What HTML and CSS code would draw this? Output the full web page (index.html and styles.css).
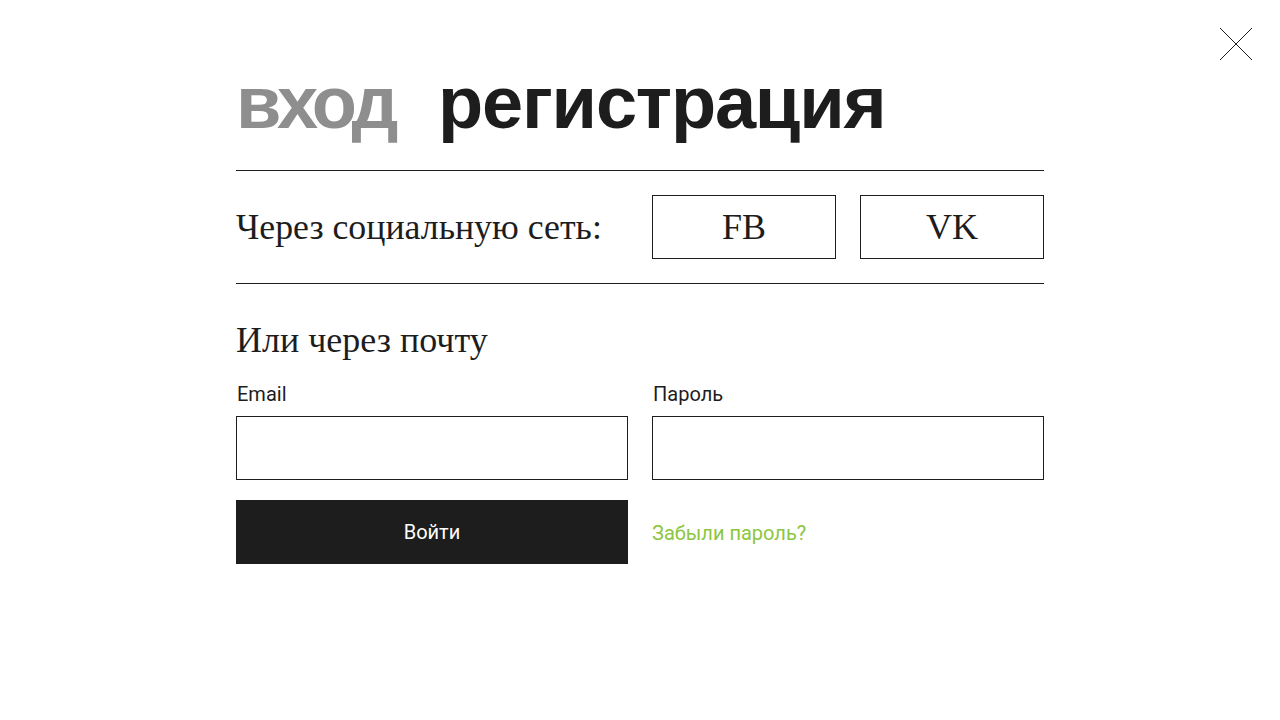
FILE: index.html
```html
<!DOCTYPE html>
<html lang="ru">
<head>
<meta charset="utf-8">
<title>Вход</title>
<link rel="stylesheet" href="styles.css">
</head>
<body>
<button class="close" aria-label="Закрыть">
  <svg width="34" height="34" viewBox="0 0 34 34"><path d="M1 1L33 33M33 1L1 33" stroke="#1d1d1d" stroke-width="1" fill="none"/></svg>
</button>
<main class="auth">
  <div class="tabs">
    <span class="tab tab-inactive">вход</span>
    <span class="tab tab-active">регистрация</span>
  </div>
  <section class="social">
    <h2 class="social-title">Через социальную сеть:</h2>
    <div class="social-buttons">
      <button class="social-btn">FB</button>
      <button class="social-btn">VK</button>
    </div>
  </section>
  <section class="mail">
    <h2 class="mail-title">Или через почту</h2>
    <div class="grid">
      <label class="field">
        <span class="label">Email</span>
        <input class="input" type="text">
      </label>
      <label class="field">
        <span class="label">Пароль</span>
        <input class="input" type="password">
      </label>
      <button class="submit">Войти</button>
      <a class="forgot" href="#">Забыли пароль?</a>
    </div>
  </section>
</main>
</body>
</html>
```
FILE: styles.css
```css
* { box-sizing: border-box; }
html, body { margin: 0; padding: 0; background: #fff; }
body { width: 1280px; height: 720px; position: relative; color: #1d1d1d; font-family: "Liberation Serif", serif; }

.close {
  position: absolute; top: 27px; left: 1219px;
  width: 34px; height: 34px; padding: 0; border: 0; background: none; cursor: pointer;
}
.close svg { display: block; }

.auth { width: 808px; margin: 0 auto; padding-top: 58px; }

.tabs {
  display: flex; gap: 44px; align-items: baseline;
  font-family: "Liberation Sans", Arial, sans-serif; font-weight: 700;
  font-size: 74px; line-height: 90px;
  padding-bottom: 22px; border-bottom: 1px solid #1d1d1d;
}
.tab-inactive { color: #8e8e8e; letter-spacing: -4.5px; }
.tab-active { color: #1d1d1d; letter-spacing: -1.2px; }

.social {
  display: flex; align-items: center; justify-content: space-between;
  padding: 24px 0; border-bottom: 1px solid #1d1d1d;
}
.social-title { margin: 0; font-weight: 400; font-size: 35.8px; line-height: 40px; }
.social-buttons { display: flex; gap: 24px; }
.social-btn {
  width: 184px; height: 64px; border: 1px solid #1d1d1d; background: #fff;
  font-family: "Liberation Serif", serif; font-size: 36px; color: #1d1d1d; padding: 0;
}

.mail { padding-top: 34px; }
.mail-title { margin: 0 0 20px; font-weight: 400; font-size: 36px; line-height: 44px; }

.grid { display: grid; grid-template-columns: 392px 392px; column-gap: 24px; row-gap: 20px; align-items: center; }
.field { display: flex; flex-direction: column; gap: 10px; }
.label { font-family: Roboto, "Liberation Sans", sans-serif; font-size: 20px; line-height: 24px; padding-left: 1px; color: #1d1d1d; }
.input { width: 392px; height: 64px; border: 1px solid #1d1d1d; margin: 0; padding: 0 16px; font-size: 18px; background: #fff; }
.submit {
  height: 64px; border: 0; background: #1d1d1d; color: #fff;
  font-family: Roboto, "Liberation Sans", sans-serif; font-size: 20px; padding: 0;
}
.forgot { font-family: Roboto, "Liberation Sans", sans-serif; font-size: 20px; color: #8cc63f; text-decoration: none; padding-top: 2px; }
```
